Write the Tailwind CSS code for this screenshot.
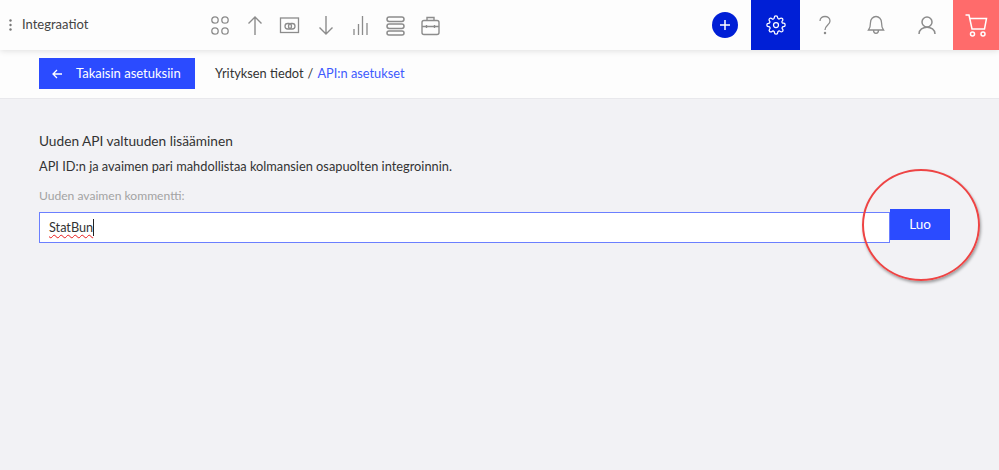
<!DOCTYPE html>
<html lang="fi">
<head>
<meta charset="utf-8">
<script src="https://cdn.jsdelivr.net/npm/@tailwindcss/browser@4"></script>
</head>
<body class="font-['Lato','Noto_Sans',sans-serif] bg-[#f2f2f5] text-[#333] overflow-hidden">
<div class="relative w-[999px] h-[470px] bg-[#f2f2f5]">
  <header class="relative z-10 h-[50px] bg-[#fdfdfd] flex items-stretch shadow-[0_1px_6px_rgba(0,0,0,0.12)]">
    <div class="w-[208px] flex items-center pl-[9px] gap-[10px]">
      <svg width="3" height="12" viewBox="0 0 3 12" fill="#777"><circle cx="1.5" cy="1.5" r="1.2"/><circle cx="1.5" cy="6" r="1.2"/><circle cx="1.5" cy="10.5" r="1.2"/></svg>
      <span class="text-[13px] text-[#444]">Integraatiot</span>
    </div>
    <nav class="flex items-center gap-[11.2px] text-[#8c8c8c]">
      <svg width="24" height="24" viewBox="0 0 24 24" fill="none" stroke="currentColor" stroke-width="1.3"><circle cx="7" cy="7" r="3.2"/><circle cx="17" cy="7" r="3.2"/><circle cx="7" cy="18" r="3.2"/><circle cx="17" cy="18" r="3.2"/></svg>
      <svg width="24" height="24" viewBox="0 0 24 24" fill="none" stroke="currentColor" stroke-width="1.4"><path d="M12 4v18M5.500 10.500 12 4l6.500 6.500"/></svg>
      <svg width="24" height="24" viewBox="0 0 24 24" fill="none" stroke="currentColor" stroke-width="1.3"><rect x="2.5" y="5" width="18" height="14.500"/><rect x="7" y="10.500" width="6.500" height="5.500" rx="2.700"/><rect x="10.500" y="10.500" width="6.500" height="5.500" rx="2.700"/></svg>
      <svg width="24" height="24" viewBox="0 0 24 24" fill="none" stroke="currentColor" stroke-width="1.4"><path d="M12 3v18M5.500 14.500 12 21l6.500-6.500"/></svg>
      <svg width="24" height="24" viewBox="0 0 24 24" fill="none" stroke="currentColor" stroke-width="1.300"><path d="M5 22v-6M9.500 22V11M13.500 22V3M18 22V10"/></svg>
      <svg width="24" height="24" viewBox="0 0 24 24" fill="none" stroke="currentColor" stroke-width="1.500"><rect x="3" y="4" width="17" height="4.500" rx="2.200"/><rect x="3" y="11" width="17" height="4.500" rx="2.200"/><rect x="3" y="18" width="17" height="4" rx="2"/></svg>
      <svg width="24" height="24" viewBox="0 0 24 24" fill="none" stroke="currentColor" stroke-width="1.400"><rect x="3" y="7.500" width="17" height="14" rx="2"/><path d="M8 7.500V4.500h7v3M3 13.500h17M7.500 12v3M15.500 12v3"/></svg>
    </nav>
    <div class="ml-auto flex items-stretch">
      <div class="w-[40px] flex items-center justify-center pr-[14px]">
        <span class="w-[26px] h-[26px] shrink-0 rounded-full bg-[#001fd6] flex items-center justify-center">
          <svg width="12" height="12" viewBox="0 0 12 12" fill="none" stroke="white" stroke-width="1.500"><path d="M6 1v10M1 6h10"/></svg>
        </span>
      </div>
      <div class="w-[49px] bg-[#001fd6] flex items-center justify-center ml-[-1px]">
        <svg width="20" height="20" viewBox="0 0 24 24" fill="none" stroke="white" stroke-width="1.500" stroke-linecap="round" stroke-linejoin="round"><circle cx="12" cy="12" r="3"/><path d="M19.4 15a1.650 1.650 0 0 0 .33 1.820l.06.06a2 2 0 1 1-2.830 2.830l-.06-.06a1.650 1.650 0 0 0-2.800 1.170V21a2 2 0 1 1-4 0v-.09A1.650 1.650 0 0 0 7.300 19.700l-.06.06a2 2 0 1 1-2.830-2.830l.06-.06a1.650 1.650 0 0 0-1.170-2.800H3a2 2 0 1 1 0-4h.09A1.650 1.650 0 0 0 4.300 7.300l-.06-.06a2 2 0 1 1 2.830-2.830l.06.06a1.650 1.650 0 0 0 2.800-1.170V3a2 2 0 1 1 4 0v.09a1.650 1.650 0 0 0 2.800 1.170l.06-.06a2 2 0 1 1 2.830 2.830l-.06.06a1.650 1.650 0 0 0 1.170 2.800H21a2 2 0 1 1 0 4h-.09a1.650 1.650 0 0 0-1.510 1z"/></svg>
      </div>
      <div class="w-[50px] flex items-center justify-center">
        <svg width="12" height="20" viewBox="0 0 12 20" fill="none" stroke="#8c8c8c" stroke-width="1.300"><path d="M1 6c0-6 10-6 10 0 0 4-5 4-5 9"/><circle cx="6" cy="18" r="0.600" fill="#8c8c8c"/></svg>
      </div>
      <div class="w-[51px] flex items-center justify-center">
        <svg width="18" height="20" viewBox="0 0 18 20" fill="none" stroke="#8c8c8c" stroke-width="1.300"><path d="M1.500 15h15c-1.500-2-2-3-2-7.500a5.500 6 0 0 0-11 0c0 4.500-.5 5.500-2 7.500zM6.500 15c0 4.500 5 4.500 5 0"/></svg>
      </div>
      <div class="w-[52px] flex items-center justify-center">
        <svg width="20" height="20" viewBox="0 0 20 20" fill="none" stroke="#8c8c8c" stroke-width="1.500"><circle cx="10" cy="7" r="5"/><path d="M2 19c0-9 16-9 16 0"/></svg>
      </div>
      <div class="w-[46px] bg-[#ff6b6b] flex items-center justify-center">
        <svg width="24" height="24" viewBox="0 0 24 24" fill="none" stroke="white" stroke-width="1.500"><path d="M1.500 2h3.500l3 14h12.500l2-10.500H5.600"/><circle cx="8.500" cy="21" r="2"/><circle cx="19" cy="21" r="2"/></svg>
      </div>
    </div>
  </header>
  <div class="h-[49px] bg-[#fdfdfd] border-b border-[#e8e8ec] flex items-center pl-[39px] pb-[1px]">
    <button class="w-[156px] h-[31px] bg-[#2b4bff] text-white text-[13px] flex items-center pl-[13px] gap-[14px]">
      <svg width="10" height="10" viewBox="0 0 10 10" fill="none" stroke="white" stroke-width="1.300"><path d="M10 5H1M5 1 1 5l4 4"/></svg>
      <span>Takaisin asetuksiin</span>
    </button>
    <span class="ml-[20px] text-[12.8px] text-[#333]">Yrityksen tiedot<span class="mx-[4px]">/</span><span class="text-[#3d5afe]">API:n asetukset</span></span>
  </div>
  <main class="pl-[39px] pr-[49px]">
    <h2 class="mt-[32px] text-[13.7px] leading-[20px] text-[#333]">Uuden API valtuuden lisääminen</h2>
    <p class="mt-[5px] text-[12.8px] leading-[20px] text-[#333]">API ID:n ja avaimen pari mahdollistaa kolmansien osapuolten integroinnin.</p>
    <label class="block mt-[10px] text-[12.1px] leading-[20px] text-[#a3a3a3]">Uuden avaimen kommentti:</label>
    <div class="flex items-start mt-[3px]">
      <div class="w-[851px] h-[31px] mt-[3px] bg-white border border-[#6b7fff] flex items-center pl-[9px] text-[12.7px] text-[#333]">
        <span class="underline decoration-wavy decoration-[#e81c1c] decoration-1 underline-offset-2">StatBun</span><span class="w-px h-[17px] bg-[#222]"></span>
      </div>
      <button class="w-[60px] h-[31px] bg-[#2b4bff] text-white text-[13.500px]">Luo</button>
    </div>
  </main>
  <div class="absolute left-[862px] top-[169px] w-[118px] h-[112px] rounded-[50%] border-2 border-[#ee4444] shadow-[1px_2px_3px_rgba(0,0,0,0.35)]"></div>
</div>
</body>
</html>
